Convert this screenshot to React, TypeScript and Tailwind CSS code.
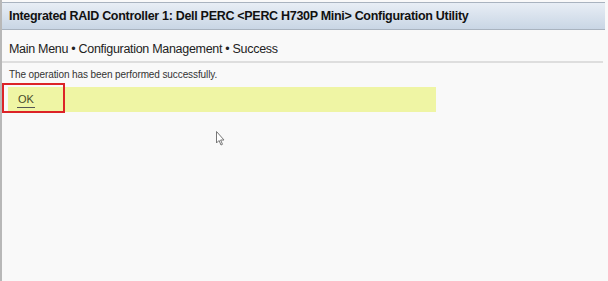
export default function App() {
  return (
    <div className="w-[608px] h-[281px] bg-[#f9f9f9] font-['Liberation_Sans',Arial,sans-serif] overflow-hidden relative">
      <div className="h-full border-l-2 border-[#b8b8b8] mr-[3px] flex flex-col">
        {/* Title */}
        <div className="mt-[2px] h-[28px] border-t border-b border-[#a9b3bf] bg-gradient-to-b from-[#e8eef5] to-[#c9d6e5] flex items-center pl-[7px]">
          <span className="text-[12.5px] font-bold text-[#111] tracking-[-0.3px]">
            Integrated RAID Controller 1: Dell PERC &lt;PERC H730P Mini&gt; Configuration Utility
          </span>
        </div>

        {/* Breadcrumb */}
        <div className="h-[33px] flex items-center pl-[7px] border-b-2 border-[#dedede] mr-[2px] pt-[7px]">
          <span className="text-[12.5px] text-[#222] tracking-[-0.3px]">
            Main Menu • Configuration Management • Success
          </span>
        </div>

        <div className="pl-[7px] pt-[6px] text-[10px] text-[#333] leading-[12px] tracking-[-0.1px]">
          The operation has been performed successfully.
        </div>

        <div className="relative mt-[6px] ml-[6px] w-[428px] h-[25px] bg-[#eff5a4] flex items-center pl-[9px]">
          <span className="text-[11px] text-[#4a4a2a] border-b border-[#555] leading-[15px] px-[1px]">OK</span>
          <div className="absolute -left-[6px] -top-[4px] w-[63px] h-[30px] border-2 border-[#dc2327]" />
        </div>

        <svg className="absolute left-[216px] top-[131px]" width="10" height="16" viewBox="0 0 10 16">
          <path d="M0.5 0.5 L0.5 12 L3 9.5 L5 14 L6.5 13.3 L4.6 9 L8 9 Z" fill="#fff" stroke="#777" strokeWidth="1" />
        </svg>
      </div>
    </div>
  );
}
